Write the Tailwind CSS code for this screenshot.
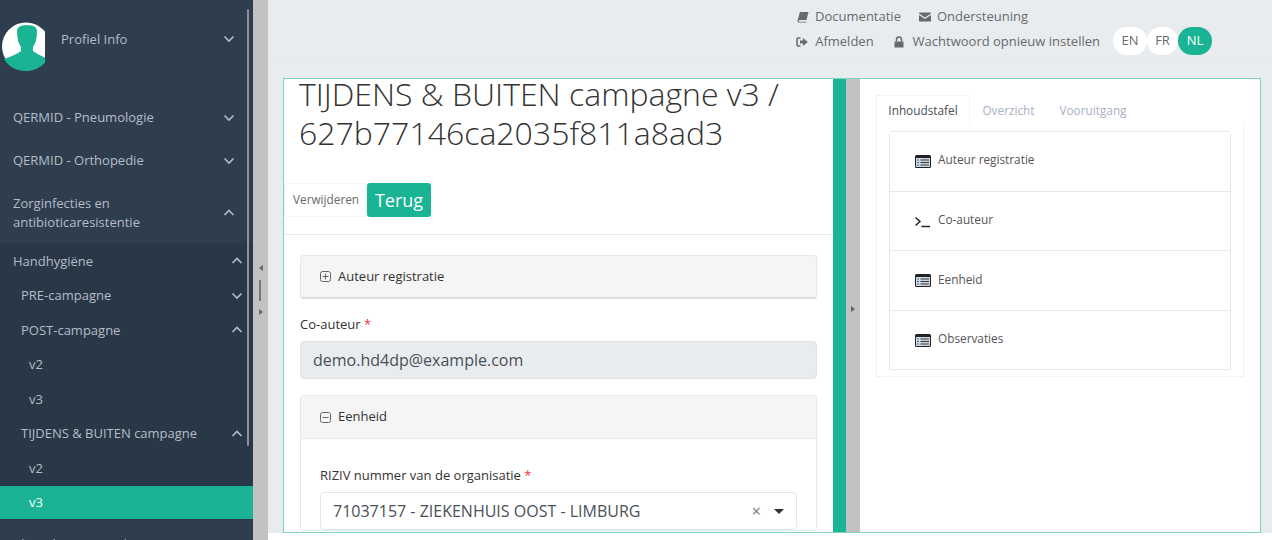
<!DOCTYPE html>
<html lang="nl">
<head>
    <meta charset="UTF-8">
    <title>TIJDENS & BUITEN campagne v3</title>
    <script src="https://cdn.jsdelivr.net/npm/@tailwindcss/browser@4"></script>
</head>
<body class="bg-white font-['Open_Sans',sans-serif] overflow-hidden">
<div class="flex h-[540px] w-[1272px] overflow-hidden">

    <!-- Sidebar -->
    <aside class="relative w-[253px] h-full shrink-0 bg-[#2f3e4e] text-[#b4bcc8] text-[13px] overflow-hidden">
        <div class="h-[96px] flex items-start">
            <svg class="ml-[2px] mt-[22px] w-[46px] h-[49px]" viewBox="0 0 46 49">
                <defs><clipPath id="av"><rect x="0" y="0" width="43" height="49"/></clipPath></defs>
                <g clip-path="url(#av)">
                    <circle cx="24" cy="24.5" r="24" fill="#fff"/>
                    <path d="M2 37 Q14 33 19 29 L19 25 Q15 20 15 9 Q15 3 25 3 Q35 3 35 9 Q35 20 31 25 L31 29 Q36 33 46 37 Q38 49 24 49 Q9 49 2 37Z" fill="#1ab394"/>
                </g>
            </svg>
            <span class="ml-[13px] mt-[29px] leading-5">Profiel Info</span>
            <svg class="absolute left-[223px] top-[34px] w-3 h-2.5" viewBox="0 0 12 10"><path d="M1.5 2.5 L6 7 L10.500 2.500" fill="none" stroke="#b4bcc8" stroke-width="1.600"/></svg>
        </div>
        <div class="h-[43px] pt-[1px] flex items-center justify-between pl-[13px] pr-[18px] border-b border-[#2a3847]">
            <span>QERMID - Pneumologie</span>
            <svg class="w-3 h-2.5" viewBox="0 0 12 10"><path d="M1.5 2.5 L6 7 L10.500 2.500" fill="none" stroke="#b4bcc8" stroke-width="1.600"/></svg>
        </div>
        <div class="h-[44px] flex items-center justify-between pl-[13px] pr-[18px] border-b border-[#2a3847]">
            <span>QERMID - Orthopedie</span>
            <svg class="w-3 h-2.5" viewBox="0 0 12 10"><path d="M1.5 2.5 L6 7 L10.500 2.500" fill="none" stroke="#b4bcc8" stroke-width="1.600"/></svg>
        </div>
        <div class="h-[60px] flex items-center justify-between pl-[13px] pr-[18px]">
            <span class="leading-[19px] -mt-[1px]">Zorginfecties en<br>antibioticaresistentie</span>
            <svg class="w-3 h-2.5" viewBox="0 0 12 10"><path d="M1.5 7 L6 2.500 L10.500 7" fill="none" stroke="#b4bcc8" stroke-width="1.600"/></svg>
        </div>
        <div class="bg-[#293846] pt-[1px]">
            <div class="h-[34.500px] flex items-center justify-between pl-[13px] pr-[10px]">
                <span>Handhygiëne</span>
                <svg class="w-3 h-2.5" viewBox="0 0 12 10"><path d="M1.5 7 L6 2.500 L10.500 7" fill="none" stroke="#b4bcc8" stroke-width="1.600"/></svg>
            </div>
            <div class="h-[34.500px] flex items-center justify-between pl-[21px] pr-[10px]">
                <span>PRE-campagne</span>
                <svg class="w-3 h-2.5" viewBox="0 0 12 10"><path d="M1.5 2.500 L6 7 L10.500 2.500" fill="none" stroke="#b4bcc8" stroke-width="1.600"/></svg>
            </div>
            <div class="h-[34.500px] flex items-center justify-between pl-[21px] pr-[10px]">
                <span>POST-campagne</span>
                <svg class="w-3 h-2.5" viewBox="0 0 12 10"><path d="M1.5 7 L6 2.500 L10.500 7" fill="none" stroke="#b4bcc8" stroke-width="1.600"/></svg>
            </div>
            <div class="h-[34.500px] flex items-center pl-[29px]">v2</div>
            <div class="h-[34.500px] flex items-center pl-[29px]">v3</div>
            <div class="h-[34.500px] flex items-center justify-between pl-[21px] pr-[10px]">
                <span>TIJDENS &amp; BUITEN campagne</span>
                <svg class="w-3 h-2.5" viewBox="0 0 12 10"><path d="M1.5 7 L6 2.500 L10.500 7" fill="none" stroke="#b4bcc8" stroke-width="1.600"/></svg>
            </div>
            <div class="h-[35px] flex items-center pl-[29px]">v2</div>
            <div class="h-[33px] flex items-center pl-[29px] bg-[#1ab394] text-white">v3</div>
        </div>
        <div class="pl-[13px] pt-[14px] leading-5 whitespace-nowrap border-t border-[#293846]">
            Clinical Measures | Entry Assessment M
        </div>
        <!-- scrollbar -->
        <div class="absolute left-[247px] top-[9px] w-[2px] h-[437px] bg-[#8a939c] rounded"></div>
    </aside>

    <!-- Splitter -->
    <div class="relative w-[15px] h-full shrink-0 bg-[#c2c2c2]">
        <div class="absolute left-[6px] top-[265px] w-0 h-0 border-y-[3px] border-y-transparent border-r-[4px] border-r-[#666]"></div>
        <div class="absolute left-[6px] top-[280px] w-[2px] h-[21px] bg-[#777]"></div>
        <div class="absolute left-[6px] top-[309px] w-0 h-0 border-y-[3px] border-y-transparent border-l-[4px] border-l-[#666]"></div>
    </div>

    <!-- Main -->
    <div class="flex-1 min-w-0 h-full flex flex-col">
        <div class="h-[533px] bg-[#e9ecef] flex flex-col">
            <header class="h-[64px] shrink-0 border-b border-[#e5e7ea] text-[13px] text-[#676a6c] relative">
                <div class="flex justify-end items-center gap-[18px] h-[18px] mt-[8px] pr-[244px]">
                    <span class="flex items-center gap-[6px]">
                        <svg class="w-3 h-3" viewBox="0 0 12 12"><path d="M3 1 H11.500 L9.500 9 H2.500 Q1.500 9 1.700 10 Q1.800 10.700 2.700 10.700 H9.500 L9.300 11.500 H2 Q.5 11.500 .5 9.800 Q.5 9 1 8Z" fill="#676a6c"/></svg>
                        Documentatie
                    </span>
                    <span class="flex items-center gap-[6px]">
                        <svg class="w-3 h-3" viewBox="0 0 12 12"><path d="M0 2.500 Q0 1.500 1 1.500 H11 Q12 1.500 12 2.500 L6 6.500 Z M0 4 L6 8 L12 4 V10 Q12 10.500 11 10.500 H1 Q0 10.500 0 10Z" fill="#676a6c"/></svg>
                        Ondersteuning
                    </span>
                </div>
                <div class="absolute right-[60px] top-[27px] flex items-center gap-[19px] h-[28px] whitespace-nowrap">
                    <span class="flex items-center gap-[7px] ml-[1px] mt-[2px]">
                        <svg class="w-3 h-3" viewBox="0 0 12 12"><path d="M4.500 2 H2 Q1 2 1 3 V9 Q1 10 2 10 H4.500" fill="none" stroke="#676a6c" stroke-width="1.500"/><path d="M4 4.500 H7 V2 L11.800 6 L7 10 V7.500 H4Z" fill="#676a6c"/></svg>
                        Afmelden
                    </span>
                    <span class="flex items-center gap-[8px] mt-[2px]">
                        <svg class="w-3 h-3" viewBox="0 0 12 12"><path d="M1.500 5.500 H10.500 V11.500 H1.500Z" fill="#676a6c"/><path d="M3.500 5.500 V3.500 Q3.500 1 6 1 Q8.500 1 8.500 3.500 V5.500" fill="none" stroke="#676a6c" stroke-width="1.500"/></svg>
                        Wachtwoord opnieuw instellen
                    </span>
                    <span class="flex h-[28px] ml-[-6px]">
                        <span class="w-[34px] flex items-center justify-center rounded-[14px] bg-white">EN</span>
                        <span class="w-[31px] flex items-center justify-center rounded-[14px] bg-white">FR</span>
                        <span class="w-[34px] flex items-center justify-center rounded-[14px] bg-[#1ab394] text-white">NL</span>
                    </span>
                </div>
            </header>

            <!-- Bordered workspace -->
            <div class="flex-1 min-h-0 flex pl-[15px] pr-[11px] mt-[14px]">
                <div class="flex-1 min-w-0 flex border border-[#7fd1c0] bg-white overflow-hidden">

                    <!-- Form panel -->
                    <section class="w-[549px] shrink-0 overflow-hidden">
                        <h1 class="pl-[15px] text-[32px] leading-[39px] text-[#333] font-light h-[85px] -mt-[5px]">TIJDENS &amp; BUITEN campagne v3 / 627b77146ca2035f811a8ad3</h1>
                        <div class="flex mt-[24px] pb-[17px] border-b border-[#e7eaec] items-stretch">
                            <span class="w-[83px] h-[34px] pl-[8px] flex items-center text-[11.800px] text-[#676a6c] border border-[#f3f3f4] rounded-[3px]">Verwijderen</span>
                            <span class="w-[64px] h-[34px] flex items-center justify-center text-lg text-white bg-[#1ab394] rounded-[3px]">Terug</span>
                        </div>
                        <div class="px-[16px] pt-[20px]">
                            <div class="h-[44px] flex items-center pl-[19px] bg-[#f5f5f5] border border-[#e7eaec] border-b-2 border-b-[#dcdfe2] rounded-[3px] text-[13px] text-[#333]">
                                <svg class="w-[11px] h-[11px] mr-[7px]" viewBox="0 0 11 11"><rect x=".5" y=".5" width="10" height="10" rx="2" fill="none" stroke="#666"/><path d="M2.500 5.500 H8.500 M5.500 2.500 V8.500" stroke="#666"/></svg>
                                Auteur registratie
                            </div>
                            <label class="block mt-[15px] text-[13px] leading-5 text-[#333]">Co-auteur <span class="text-red-500">*</span></label>
                            <div class="mt-[7px] h-[38px] flex items-center px-[12px] bg-[#e9ecef] border border-[#dee2e6] rounded-[4px] text-base text-[#495057]">demo.hd4dp@example.com</div>
                            <div class="mt-[16px] border border-[#e7eaec] rounded-[3px]">
                                <div class="h-[43px] flex items-center pl-[19px] bg-[#f5f5f5] border-b border-[#e7eaec] text-[13px] text-[#333]">
                                    <svg class="w-[11px] h-[11px] mr-[7px]" viewBox="0 0 11 11"><rect x=".5" y=".5" width="10" height="10" rx="2" fill="none" stroke="#666"/><path d="M2.500 5.500 H8.500" stroke="#666"/></svg>
                                    Eenheid
                                </div>
                                <div class="px-[19px] pt-[26px]">
                                    <label class="block text-[13px] leading-5 text-[#333]">RIZIV nummer van de organisatie <span class="text-red-500">*</span></label>
                                    <div class="mt-[7px] h-[38px] flex items-center pl-[12px] pr-[12px] bg-white border border-[#e2e6ea] rounded-[4px] text-base text-[#495057]">
                                        <span class="flex-1">71037157 - ZIEKENHUIS OOST - LIMBURG</span>
                                        <span class="text-[#777] text-base mr-[13px]">×</span>
                                        <span class="w-0 h-0 border-x-[5px] border-x-transparent border-t-[5px] border-t-[#333]"></span>
                                    </div>
                                </div>
                            </div>
                        </div>
                    </section>

                    <!-- Green bar + collapse handle -->
                    <div class="w-[13px] shrink-0 bg-[#1ab394]"></div>
                    <div class="relative w-[14px] shrink-0 bg-[#c2c2c2]">
                        <div class="absolute left-[5px] top-[227px] w-0 h-0 border-y-[3px] border-y-transparent border-l-[4px] border-l-[#666]"></div>
                    </div>

                    <!-- Table of contents panel -->
                    <section class="flex-1 min-w-0 pl-[16px] pr-[16px] pt-[16px] text-[11.800px] text-[#555]">
                        <div class="flex h-[30px] ml-0">
                            <span class="w-[94px] pt-[1px] flex items-center justify-center border border-[#f3f3f4] border-b-0 text-[#495057]">Inhoudstafel</span>
                            <span class="w-[77px] pt-[1px] flex items-center justify-center text-[#a7b1c2]">Overzicht</span>
                            <span class="ml-[1px] w-[90px] pt-[1px] flex items-center justify-center text-[#a7b1c2]">Vooruitgang</span>
                        </div>
                        <div class="h-[252px] border border-t-0 border-[#f3f3f4] pl-[12px] pr-[12px] pt-[6px]">
                            <div class="border border-[#e7eaec] rounded-[3px] text-[#555] h-[239px]">
                                <div class="h-[60px] flex items-center pl-[25px] gap-[7px] border-b border-[#e7eaec] pb-[3px]">
                                    <svg class="w-4 h-[13px] mt-[2px]" viewBox="0 0 16 13"><rect width="16" height="13" rx="1.500" fill="#222"/><rect x="1" y="3" width="14" height="9" fill="#cfd8e3"/><path d="M2 5 H4 M2 7.500 H4 M2 10 H4" stroke="#3a6ea5"/><path d="M5.500 5 H14 M5.500 7.500 H14 M5.500 10 H14" stroke="#333"/></svg>
                                    Auteur registratie
                                </div>
                                <div class="h-[59px] flex items-center pl-[25px] gap-[8px] border-b border-[#e7eaec] pb-[2px]">
                                    <svg class="w-[15px] h-[13px] mt-[2px]" viewBox="0 0 15 13"><path d="M.5 2.500 L5 6.500 L.5 10.500" fill="none" stroke="#222" stroke-width="1.500"/><path d="M6.500 11.500 H15" stroke="#222" stroke-width="1.500"/></svg>
                                    Co-auteur
                                </div>
                                <div class="h-[60px] flex items-center pl-[25px] gap-[7px] border-b border-[#e7eaec] pb-[2px]">
                                    <svg class="w-4 h-[13px] mt-[2px]" viewBox="0 0 16 13"><rect width="16" height="13" rx="1.500" fill="#222"/><rect x="1" y="3" width="14" height="9" fill="#cfd8e3"/><path d="M2 5 H4 M2 7.500 H4 M2 10 H4" stroke="#3a6ea5"/><path d="M5.500 5 H14 M5.500 7.500 H14 M5.500 10 H14" stroke="#333"/></svg>
                                    Eenheid
                                </div>
                                <div class="h-[59px] flex items-center pl-[25px] gap-[7px] pb-[3px]">
                                    <svg class="w-4 h-[13px] mt-[2px]" viewBox="0 0 16 13"><rect width="16" height="13" rx="1.500" fill="#222"/><rect x="1" y="3" width="14" height="9" fill="#cfd8e3"/><path d="M2 5 H4 M2 7.500 H4 M2 10 H4" stroke="#3a6ea5"/><path d="M5.500 5 H14 M5.500 7.500 H14 M5.500 10 H14" stroke="#333"/></svg>
                                    Observaties
                                </div>
                            </div>
                        </div>
                    </section>
                </div>
            </div>
        </div>
        <div class="flex-1 bg-white"></div>
    </div>
</div>
</body>
</html>
